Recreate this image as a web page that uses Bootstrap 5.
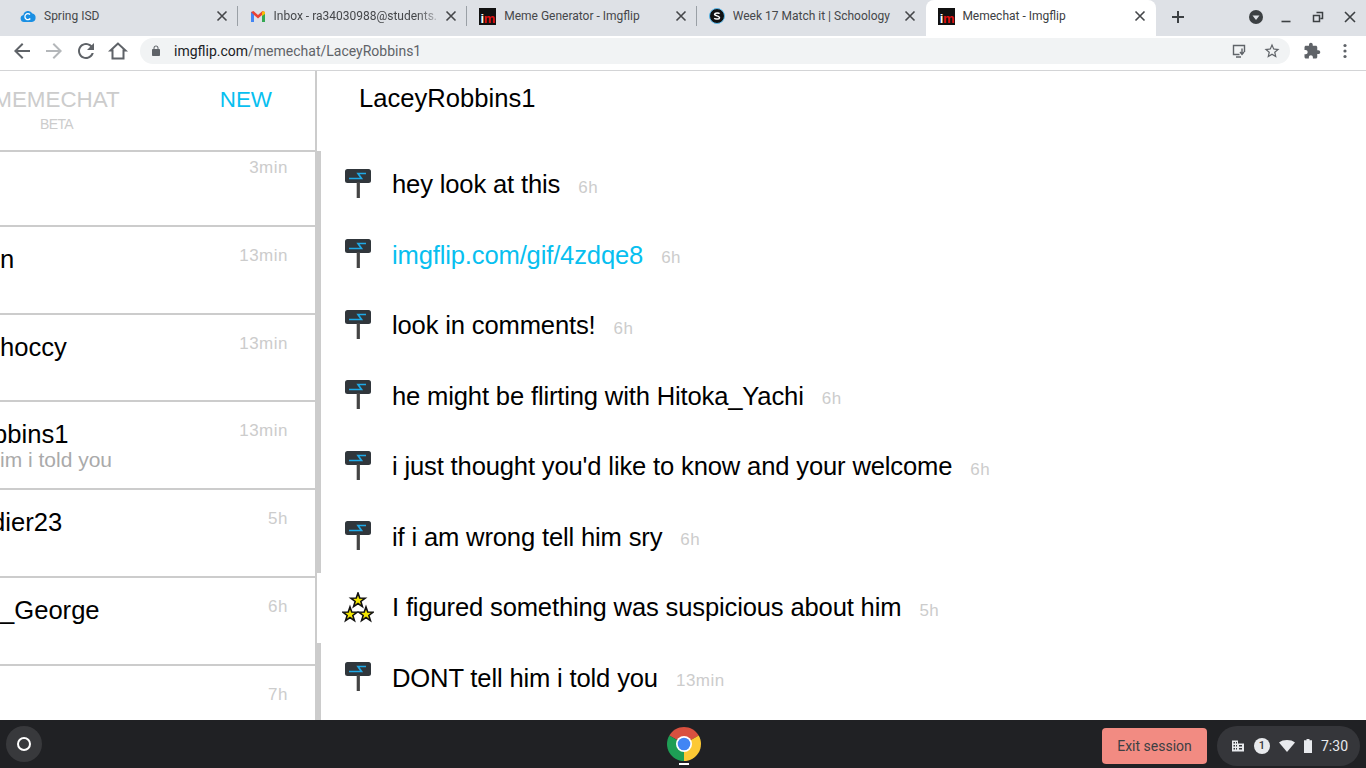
<!DOCTYPE html>
<html lang="en">
<head>
  <meta charset="UTF-8">
  <meta name="viewport" content="width=device-width, initial-scale=1.0">
  <title>Memechat - Imgflip</title>
  <link href="https://cdn.jsdelivr.net/npm/bootstrap@5.3.0/dist/css/bootstrap.min.css" rel="stylesheet">
  <style>
    html, body { height: 100%; overflow: hidden; }
    body { font-family: "Liberation Sans", Arial, sans-serif; background: #fff; color: #000; }
    .ui-font { font-family: Roboto, "Liberation Sans", sans-serif; }

    /* tab strip */
    .tab-strip { height: 36px; background: #dee1e6; padding-left: 8px; padding-bottom: 2px; }
    .strip-tab { width: 229.6px; height: 36px; margin-bottom: -2px; padding: 0 8px 4px 12px; font-size: 12px; color: #45474a; position: relative; }
    .strip-tab.has-sep::after { content: ""; position: absolute; right: 0; top: 6px; height: 20px; width: 1px; background: #9aa0a6; }
    .strip-tab.is-active { background: #fff; border-radius: 8px 8px 0 0; color: #3c4043; }
    .tab-name { margin-left: 8px; flex: 1; white-space: nowrap; overflow: hidden; min-width: 0; }
    .tab-name.tight-name { margin-left: 7px; }
    .tab-fade { -webkit-mask-image: linear-gradient(to right, #000 85%, transparent); mask-image: linear-gradient(to right, #000 85%, transparent); }
    .im-logo { width: 17px; height: 17px; background: #111; font: bold 13px/18px "Liberation Sans", sans-serif; display: block; text-align: center; flex-shrink: 0; overflow: hidden; letter-spacing: -0.5px; padding-top: 2px; }
    .im-logo b { color: #fff; }
    .im-logo i { color: #e01010; font-style: normal; }
    .win-ctrl { margin-left: auto; padding-right: 8px; gap: 16px; }
    .win-drop { margin-right: -2px; margin-left: 2px; }

    /* toolbar */
    .tool-bar { height: 35px; background: #fff; border-bottom: 1px solid #d3d4d6; padding: 0 13px 4px 10px; }
    .nav-ico { width: 24px; height: 24px; flex-shrink: 0; }
    .omni-box { height: 26px; background: #f1f3f4; border-radius: 13px; flex: 1; margin: 0 5px 0 2px; padding: 0 9px 0 10px; font-size: 14px; color: #5f6368; }
    .omni-box b { font-weight: 400; color: #202124; }

    /* page */
    .page-area { flex: 1; min-height: 0; overflow: hidden; }
    .chat-side { width: 315px; flex-shrink: 0; overflow: hidden; }
    .side-head { height: 81px; border-bottom: 2px solid #ccc; }
    .brand-box { width: 127px; margin-left: -7px; margin-top: 15px; color: #ccc; text-align: center; }
    .brand-title { font-size: 22.4px; line-height: 28px; }
    .brand-sub { font-size: 14px; line-height: 20px; letter-spacing: -0.6px; }
    .new-btn { font-size: 22.4px; line-height: 28px; color: #08bff0; margin: 15px 43px 0 0; }
    .side-list { flex: 1; min-height: 0; overflow: hidden; }
    .side-scroll { margin-top: -13px; }
    .side-row { height: 87.75px; border-bottom: 2px solid #ccc; }
    .side-name { font-size: 25.6px; line-height: 32px; margin-top: 16px; white-space: nowrap; }
    .cut-seven { margin-left: -7px; }
    .cut-nine { margin-left: -9px; }
    .side-sub { font-size: 21px; line-height: 24px; color: #aaa; margin-top: -2px; white-space: nowrap; }
    .side-time { font-size: 17px; line-height: 20px; color: #ccc; margin: 19px 27px 0 0; letter-spacing: .5px; }
    .split-line { width: 6px; flex-shrink: 0; border-left: 2px solid #ccc; background: #fff; }
    .split-on { background: #ccc; }
    .split-top { height: 80px; }
    .split-one { height: 422px; }
    .split-two { height: 70px; }
    .split-three { flex: 1; }

    .chat-main { flex: 1; min-width: 0; padding-left: 23px; }
    .chat-head { font-size: 25.6px; line-height: 32px; padding: 11px 0 0 15px; height: 78px; }
    .chat-msg { height: 70.5px; }
    .msg-ava { width: 28px; height: 31px; flex-shrink: 0; margin: -2px 20px 0 0; }
    .msg-ava.is-wide { width: 32px; margin: 0 18px 0 -2px; }
    .msg-text { font-size: 25.6px; line-height: 32px; white-space: nowrap; letter-spacing: -0.16px; }
    .msg-text a { color: #08bff0; text-decoration: none; }
    .msg-time { font-size: 17px; color: #ccc; margin-left: 18px; padding-top: 6px; letter-spacing: .5px; white-space: nowrap; }

    /* chrome os shelf */
    .os-shelf { height: 48px; background: #202124; padding: 0 6px; flex-shrink: 0; }
    .shelf-side { flex: 1; }
    .shelf-right { padding-top: 4px; }
    .launch-btn { width: 36px; height: 36px; border-radius: 50%; background: #38393c; }
    .launch-btn span { width: 14px; height: 14px; border: 2px solid #fff; border-radius: 50%; display: block; }
    .chrome-item { padding-top: 3px; margin-left: 1px; }
    .chrome-dot { width: 10px; height: 2px; background: #fff; margin: 2px auto 0; }
    .exit-btn { width: 105px; height: 36px; background: #f28b82; color: #3c4043; font-size: 14px; border-radius: 4px; border: 0; }
    .tray-pill { width: 143px; height: 40px; background: #35363a; border-radius: 20px; margin-left: 10px; padding-left: 14px; color: #e8eaed; font-size: 14px; gap: 9px; }
    .tray-one { width: 16px; height: 16px; border-radius: 50%; background: #e8eaed; color: #35363a; font-size: 11px; font-weight: 500; line-height: 16px; text-align: center; }
  </style>
</head>
<body class="d-flex flex-column">

<svg width="0" height="0" class="position-absolute">
  <symbol id="ic-close" viewBox="0 0 16 16"><path d="M3.5 3.5l9 9M12.5 3.5l-9 9" stroke="#45474a" stroke-width="1.6" fill="none"/></symbol>
  <symbol id="ava-sign" viewBox="0 0 28 31">
    <rect x="1" y="1" width="26" height="14" rx="2.5" fill="#30363b"/>
    <rect x="12.700" y="14" width="3.200" height="16" fill="#444"/>
    <path d="M22 5.500H14L17.500 10.500H5" stroke="#1fa9e6" stroke-width="1.700" fill="none"/>
  </symbol>
  <polygon id="one-star" points="0,-7.500 1.760,-2.430 7.130,-2.320 2.850,.93 4.410,6.070 0,3 -4.410,6.070 -2.850,.93 -7.130,-2.320 -1.760,-2.430"/>
  <symbol id="ava-stars" viewBox="0 0 32 31">
    <g fill="#f2e600" stroke="#111" stroke-width="1.600">
      <use href="#one-star" x="16" y="8.500"/>
      <use href="#one-star" x="8" y="22.500"/>
      <use href="#one-star" x="24" y="22.500"/>
    </g>
  </symbol>
</svg>

<!-- tabs -->
<div class="tab-strip d-flex align-items-center ui-font">
  <div class="strip-tab has-sep d-flex align-items-center">
    <svg width="16" height="16" viewBox="0 0 16 16"><path d="M4 14a3.600 3.600 0 0 1-.6-7.100A4.800 4.800 0 0 1 12.400 5.600 4.300 4.300 0 0 1 12 14z" fill="#1a8fe3"/><path d="M10 6.500a3 3 0 1 0 .3 4" stroke="#fff" stroke-width="1.300" fill="none"/></svg>
    <span class="tab-name">Spring ISD</span>
    <svg width="16" height="16"><use href="#ic-close"/></svg>
  </div>
  <div class="strip-tab has-sep d-flex align-items-center">
    <svg width="16" height="16" viewBox="0 0 16 16"><path d="M1 14V4l2.500-1L8 7l4.500-4 2.500 1v10h-3V7L8 10.500 4 7v7z" fill="#ea4335"/><path d="M1 4v10h3V7z" fill="#4285f4"/><path d="M12 7v7h3V4z" fill="#34a853"/><path d="M12.500 3L15 4v2l-3 2V5z" fill="#fbbc04"/></svg>
    <span class="tab-name tab-fade">Inbox - ra34030988@students.</span>
    <svg width="16" height="16"><use href="#ic-close"/></svg>
  </div>
  <div class="strip-tab has-sep d-flex align-items-center">
    <span class="im-logo"><b>i</b><i>m</i></span>
    <span class="tab-name">Meme Generator - Imgflip</span>
    <svg width="16" height="16"><use href="#ic-close"/></svg>
  </div>
  <div class="strip-tab d-flex align-items-center">
    <svg width="16" height="16" viewBox="0 0 16 16"><circle cx="8" cy="8" r="7.500" fill="#111" stroke="#5ab8ea" stroke-width="1"/><path d="M10.600 5.700C10 4.800 6 4.400 5.600 6.200 5.200 8 10.800 7.800 10.500 9.800 10.200 11.600 6 11.300 5.300 10.200" stroke="#fff" stroke-width="1.500" fill="none"/></svg>
    <span class="tab-name">Week 17 Match it | Schoology</span>
    <svg width="16" height="16"><use href="#ic-close"/></svg>
  </div>
  <div class="strip-tab is-active d-flex align-items-center">
    <span class="im-logo"><b>i</b><i>m</i></span>
    <span class="tab-name tight-name">Memechat - Imgflip</span>
    <svg width="16" height="16"><use href="#ic-close"/></svg>
  </div>
  <svg class="ms-2" width="28" height="28" viewBox="0 0 28 28"><path d="M14 8v12M8 14h12" stroke="#3c4043" stroke-width="2" fill="none"/></svg>
  <div class="win-ctrl d-flex align-items-center">
    <svg class="win-drop" width="16" height="16" viewBox="0 0 16 16"><circle cx="8" cy="8" r="7" fill="#3c4043"/><path d="M4.500 6.500h7L8 11z" fill="#dee1e6"/></svg>
    <svg width="16" height="16" viewBox="0 0 16 16"><path d="M3.500 12.500h9" stroke="#3c4043" stroke-width="1.600"/></svg>
    <svg width="16" height="16" viewBox="0 0 16 16"><path d="M6.500 3.500h6v6h-2M3.500 6.500h6v6h-6z" stroke="#3c4043" stroke-width="1.500" fill="none"/></svg>
    <svg width="16" height="16" viewBox="0 0 16 16"><path d="M3 3l10 10M13 3L3 13" stroke="#3c4043" stroke-width="1.600" fill="none"/></svg>
  </div>
</div>

<!-- toolbar -->
<div class="tool-bar d-flex align-items-center gap-2 ui-font">
  <svg class="nav-ico" viewBox="0 0 24 24" fill="#5f6368"><path d="M20 11H7.830l5.590-5.590L12 4l-8 8 8 8 1.410-1.410L7.830 13H20v-2z"/></svg>
  <svg class="nav-ico" viewBox="0 0 24 24" fill="#b4b7ba"><path d="M12 4l-1.410 1.410L16.170 11H4v2h12.170l-5.580 5.590L12 20l8-8z"/></svg>
  <svg class="nav-ico" viewBox="0 0 24 24" fill="#5f6368"><path d="M17.650 6.350C16.200 4.900 14.210 4 12 4c-4.420 0-7.990 3.580-7.990 8s3.570 8 7.990 8c3.730 0 6.840-2.550 7.730-6h-2.080c-.82 2.330-3.040 4-5.650 4-3.310 0-6-2.690-6-6s2.690-6 6-6c1.660 0 3.140.69 4.220 1.780L13 11h7V4l-2.350 2.350z"/></svg>
  <svg class="nav-ico" viewBox="0 0 24 24"><path d="M12 4.500L4.500 11.500H6.500V19.500H17.500V11.500H19.500z" fill="none" stroke="#5f6368" stroke-width="2"/></svg>
  <div class="omni-box d-flex align-items-center">
    <svg width="12" height="14" viewBox="0 0 24 24" fill="#5f6368"><path d="M18 8h-1V6c0-2.760-2.240-5-5-5S7 3.240 7 6v2H6c-1.100 0-2 .9-2 2v10c0 1.100.9 2 2 2h12c1.100 0 2-.9 2-2V10c0-1.100-.9-2-2-2zM9 6c0-1.660 1.340-3 3-3s3 1.340 3 3v2H9V6z"/></svg>
    <span class="ms-2 flex-grow-1 ps-1"><b>imgflip.com</b>/memechat/LaceyRobbins1</span>
    <svg class="me-3" width="16" height="16" viewBox="0 0 16 16"><path d="M13.500 9V2.500h-11v9h6" fill="none" stroke="#5f6368" stroke-width="1.400"/><path d="M5 14h5" stroke="#5f6368" stroke-width="1.500"/><path d="M11 5.500v6M9 9l2 2.500L13 9" stroke="#5f6368" stroke-width="1.400" fill="none"/></svg>
    <svg width="18" height="18" viewBox="0 0 24 24" fill="#5f6368"><path d="M22 9.240l-7.190-.62L12 2 9.190 8.630 2 9.240l5.460 4.730L5.820 21 12 17.270 18.180 21l-1.630-7.030L22 9.240zM12 15.400l-3.760 2.270 1-4.280-3.320-2.880 4.380-.38L12 6.100l1.710 4.040 4.380.38-3.320 2.880 1 4.280L12 15.400z"/></svg>
  </div>
  <svg width="18" height="18" viewBox="0 0 24 24" fill="#5f6368"><path d="M20.500 11H19V7c0-1.100-.9-2-2-2h-4V3.500C13 2.120 11.880 1 10.500 1S8 2.120 8 3.500V5H4c-1.100 0-1.990.9-1.990 2v3.800H3.500c1.490 0 2.700 1.210 2.700 2.700s-1.210 2.700-2.700 2.700H2V20c0 1.100.9 2 2 2h3.800v-1.500c0-1.490 1.210-2.700 2.700-2.700 1.490 0 2.700 1.210 2.700 2.700V22H17c1.100 0 2-.9 2-2v-4h1.500c1.380 0 2.500-1.120 2.500-2.500S21.880 11 20.500 11z"/></svg>
  <svg class="ms-2" width="16" height="18" viewBox="0 0 16 18" fill="#5f6368"><circle cx="8" cy="3.500" r="1.600"/><circle cx="8" cy="9" r="1.600"/><circle cx="8" cy="14.500" r="1.600"/></svg>
</div>

<!-- page -->
<div class="page-area d-flex">
  <div class="chat-side d-flex flex-column">
    <div class="side-head d-flex justify-content-between flex-shrink-0">
      <div class="brand-box">
        <div class="brand-title">MEMECHAT</div>
        <div class="brand-sub">BETA</div>
      </div>
      <div class="new-btn">NEW</div>
    </div>
    <div class="side-list">
      <div class="side-scroll">
        <div class="side-row d-flex justify-content-between"><div></div><div class="side-time">3min</div></div>
        <div class="side-row d-flex justify-content-between"><div class="side-name">n</div><div class="side-time">13min</div></div>
        <div class="side-row d-flex justify-content-between"><div class="side-name">hoccy</div><div class="side-time">13min</div></div>
        <div class="side-row d-flex justify-content-between"><div><div class="side-name cut-seven">bbins1</div><div class="side-sub">im i told you</div></div><div class="side-time">13min</div></div>
        <div class="side-row d-flex justify-content-between"><div class="side-name cut-nine">dier23</div><div class="side-time">5h</div></div>
        <div class="side-row d-flex justify-content-between"><div class="side-name">_George</div><div class="side-time">6h</div></div>
        <div class="side-row d-flex justify-content-between"><div></div><div class="side-time">7h</div></div>
      </div>
    </div>
  </div>
  <div class="split-line d-flex flex-column">
    <div class="split-top"></div>
    <div class="split-one split-on"></div>
    <div class="split-two"></div>
    <div class="split-three split-on"></div>
  </div>
  <div class="chat-main">
    <div class="chat-head">LaceyRobbins1</div>
    <div class="chat-msg d-flex align-items-center"><svg class="msg-ava"><use href="#ava-sign"/></svg><div class="msg-text">hey look at this</div><div class="msg-time">6h</div></div>
    <div class="chat-msg d-flex align-items-center"><svg class="msg-ava"><use href="#ava-sign"/></svg><div class="msg-text"><a href="#">imgflip.com/gif/4zdqe8</a></div><div class="msg-time">6h</div></div>
    <div class="chat-msg d-flex align-items-center"><svg class="msg-ava"><use href="#ava-sign"/></svg><div class="msg-text">look in comments!</div><div class="msg-time">6h</div></div>
    <div class="chat-msg d-flex align-items-center"><svg class="msg-ava"><use href="#ava-sign"/></svg><div class="msg-text">he might be flirting with Hitoka_Yachi</div><div class="msg-time">6h</div></div>
    <div class="chat-msg d-flex align-items-center"><svg class="msg-ava"><use href="#ava-sign"/></svg><div class="msg-text">i just thought you'd like to know and your welcome</div><div class="msg-time">6h</div></div>
    <div class="chat-msg d-flex align-items-center"><svg class="msg-ava"><use href="#ava-sign"/></svg><div class="msg-text">if i am wrong tell him sry</div><div class="msg-time">6h</div></div>
    <div class="chat-msg d-flex align-items-center"><svg class="msg-ava is-wide"><use href="#ava-stars"/></svg><div class="msg-text">I figured something was suspicious about him</div><div class="msg-time">5h</div></div>
    <div class="chat-msg d-flex align-items-center"><svg class="msg-ava"><use href="#ava-sign"/></svg><div class="msg-text">DONT tell him i told you</div><div class="msg-time">13min</div></div>
  </div>
</div>

<!-- shelf -->
<div class="os-shelf d-flex align-items-center ui-font">
  <div class="shelf-side d-flex">
    <div class="launch-btn d-flex align-items-center justify-content-center"><span></span></div>
  </div>
  <div class="chrome-item">
    <svg class="d-block" width="34" height="34" viewBox="0 0 34 34">
      <path d="M17 17L2.300 8.500A17 17 0 0 1 31.700 8.500z" fill="#d9503f"/>
      <path d="M17 17L31.700 8.500A17 17 0 0 1 17 34z" fill="#fcc934"/>
      <path d="M17 17L17 34A17 17 0 0 1 2.300 8.500z" fill="#1e9e55"/>
      <circle cx="17" cy="17" r="8" fill="#fff"/><circle cx="17" cy="17" r="6.300" fill="#4285f4"/>
    </svg>
    <div class="chrome-dot"></div>
  </div>
  <div class="shelf-side shelf-right d-flex align-items-center justify-content-end">
    <button class="exit-btn ui-font" type="button">Exit session</button>
    <div class="tray-pill d-flex align-items-center">
      <svg width="14" height="14" viewBox="0 0 14 14" fill="#e8eaed"><path d="M1 1.500h6v3h6v8H1zM2.500 3v1.500H4V3zM5 3v1.500h1V3zM2.500 6v1.500H4V6zM5 6v1.500h1V6zM2.500 9v1.500H4V9zM5 9v1.500h1V9zM8 6v1.500h3V6zM8 9v1.500h3V9z" fill-rule="evenodd"/></svg>
      <div class="tray-one">1</div>
      <svg width="16" height="14" viewBox="0 0 16 14" fill="#e8eaed"><path d="M8 13L0 3.500C2 1.800 4.800 1 8 1s6 .8 8 2.500z"/></svg>
      <svg width="8" height="14" viewBox="0 0 8 14" fill="#e8eaed"><path d="M2.500 0h3v1.200H8V14H0V1.200h2.500z"/></svg>
      <span>7:30</span>
    </div>
  </div>
</div>

<script src="https://cdn.jsdelivr.net/npm/bootstrap@5.3.0/dist/js/bootstrap.bundle.min.js"></script>
</body>
</html>
